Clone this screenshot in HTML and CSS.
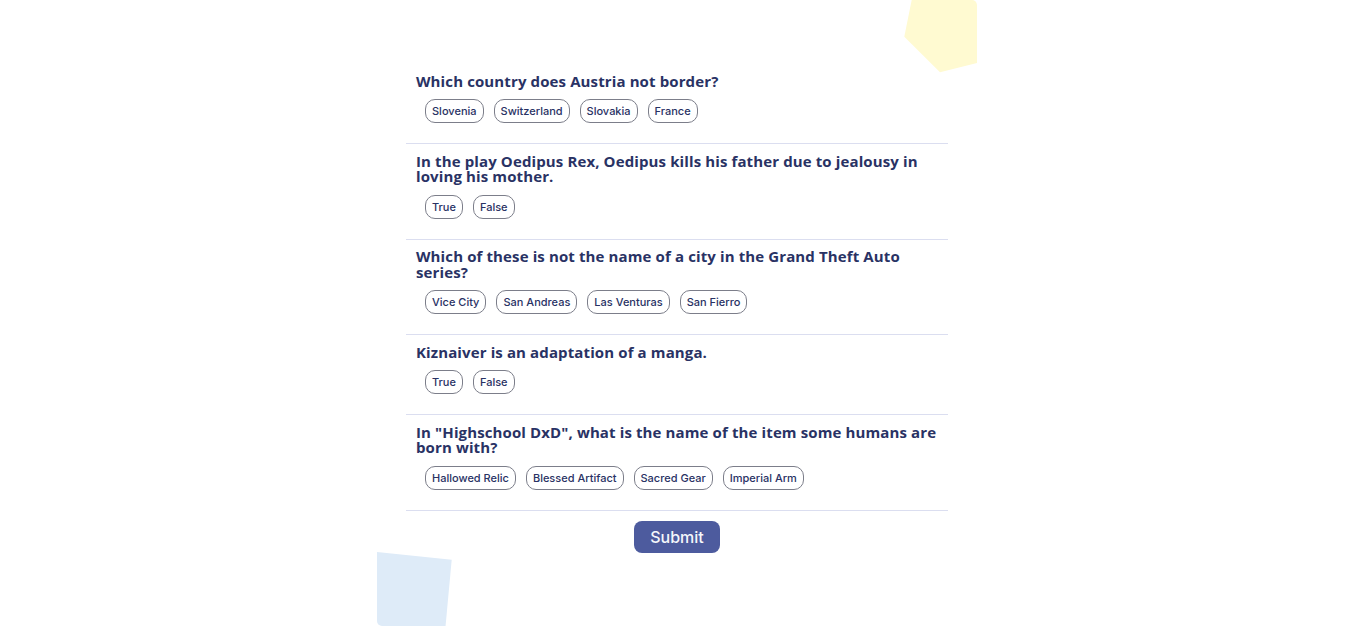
FILE: index.html
```html
<!DOCTYPE html>
<html lang="en">
<head>
<meta charset="utf-8">
<title>Quizzical</title>
<link rel="stylesheet" href="styles.css">
</head>
<body>
<main class="app">
  <svg class="blob blob-yellow" width="73" height="73" viewBox="0 0 73 73" aria-hidden="true">
    <path d="M8.7 -5 L66 -5 Q73 -5 73 5 L73 63 L36 72.3 L0.3 36.7 Z" fill="#FFFAD1"/>
  </svg>
  <svg class="blob blob-blue" width="76" height="74" viewBox="0 0 76 74" aria-hidden="true">
    <path d="M0 0 L74.7 7.7 L68 80 L0 80 Z" fill="#DEEBF8"/>
  </svg>
  <section class="quiz">
    <div class="question">
      <h2 class="q-title">Which country does Austria not border?</h2>
      <div class="answers">
        <button class="answer">Slovenia</button>
        <button class="answer">Switzerland</button>
        <button class="answer">Slovakia</button>
        <button class="answer">France</button>
      </div>
    </div>
    <div class="question">
      <h2 class="q-title">In the play Oedipus Rex, Oedipus kills his father due to jealousy in loving his mother.</h2>
      <div class="answers">
        <button class="answer">True</button>
        <button class="answer">False</button>
      </div>
    </div>
    <div class="question">
      <h2 class="q-title">Which of these is not the name of a city in the Grand Theft Auto series?</h2>
      <div class="answers">
        <button class="answer">Vice City</button>
        <button class="answer">San Andreas</button>
        <button class="answer">Las Venturas</button>
        <button class="answer">San Fierro</button>
      </div>
    </div>
    <div class="question">
      <h2 class="q-title">Kiznaiver is an adaptation of a manga.</h2>
      <div class="answers">
        <button class="answer">True</button>
        <button class="answer">False</button>
      </div>
    </div>
    <div class="question">
      <h2 class="q-title">In "Highschool DxD", what is the name of the item some humans are born with?</h2>
      <div class="answers">
        <button class="answer">Hallowed Relic</button>
        <button class="answer">Blessed Artifact</button>
        <button class="answer">Sacred Gear</button>
        <button class="answer">Imperial Arm</button>
      </div>
    </div>
    <div class="actions">
      <button class="submit">Submit</button>
    </div>
  </section>
</main>
</body>
</html>
```

FILE: styles.css
```css
* { box-sizing: border-box; }
html, body { margin: 0; padding: 0; background: #fff; }
body { font-family: Inter, "Noto Sans", sans-serif; color: #293264; }

.app {
  position: relative;
  width: 600px;
  height: 626px;
  margin: 0 auto;
  overflow: hidden;
  border-radius: 5px;
  background: #fff;
}

.blob { position: absolute; display: block; }
.blob-yellow { top: 0; right: 0; }
.blob-blue { left: 0; bottom: 0; }

.quiz {
  position: relative;
  width: 542px;
  margin: 0 auto;
  padding-top: 73.5px;
}

.question {
  padding: 0 10px 20px;
  border-bottom: 1px solid #DBDEF0;
  margin-bottom: 9.5px;
}

.q-title {
  margin: 0 0 10px;
  font-family: "Open Sans", sans-serif;
  font-weight: 700;
  font-size: 15px;
  line-height: 15.5px;
  letter-spacing: 0.12px;
  color: #293264;
}

.answers {
  display: flex;
  gap: 10px;
  padding-left: 9px;
}

.answer {
  height: 24px;
  padding: 0 6px;
  border: 1px solid #7c7e8a;
  border-radius: 10px;
  background: transparent;
  color: #293264;
  font-family: Inter, sans-serif;
  font-size: 11px;
  font-weight: 500;
}

.actions {
  display: flex;
  justify-content: center;
  padding-top: 1px;
}

.submit {
  width: 86px;
  height: 32px;
  border: none;
  border-radius: 8px;
  background: #4D5B9E;
  color: #F5F7FB;
  font-family: Inter, sans-serif;
  font-size: 16px;
  font-weight: 500;
}
```
